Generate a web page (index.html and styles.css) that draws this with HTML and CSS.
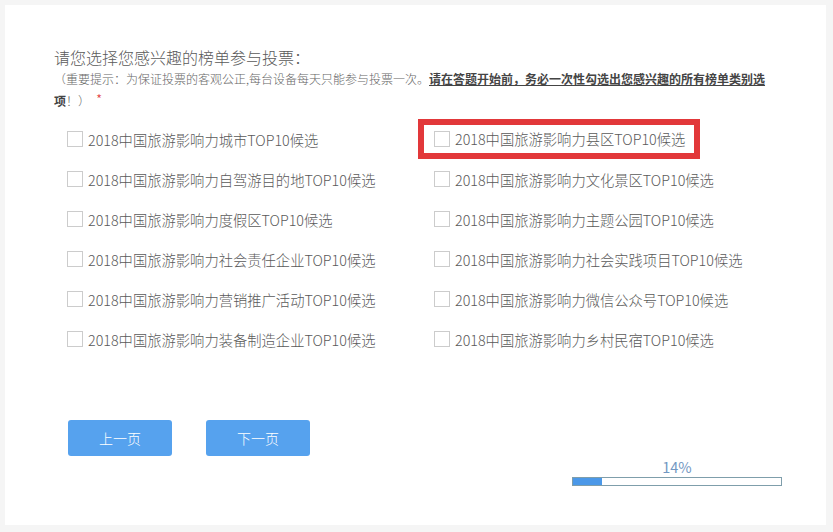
FILE: index.html
```html
<!DOCTYPE html>
<html lang="zh-CN">
<head>
<meta charset="utf-8">
<title>投票</title>
<link rel="stylesheet" href="styles.css">
</head>
<body>
<div class="card">
  <div class="title">请您选择您感兴趣的榜单参与投票：</div>
  <div class="note">（重要提示：为保证投票的客观公正,每台设备每天只能参与投票一次。<b class="em">请在答题开始前，务必一次性勾选出您感兴趣的所有榜单类别选</b><br><b class="em-plain">项</b>！）<span class="star">*</span></div>
  <div class="options">
    <div class="opt"><span class="box"></span>2018中国旅游影响力城市TOP10候选</div>
    <div class="opt"><span class="opt-hl"><span class="box"></span>2018中国旅游影响力县区TOP10候选</span></div>
    <div class="opt"><span class="box"></span>2018中国旅游影响力自驾游目的地TOP10候选</div>
    <div class="opt"><span class="box"></span>2018中国旅游影响力文化景区TOP10候选</div>
    <div class="opt"><span class="box"></span>2018中国旅游影响力度假区TOP10候选</div>
    <div class="opt"><span class="box"></span>2018中国旅游影响力主题公园TOP10候选</div>
    <div class="opt"><span class="box"></span>2018中国旅游影响力社会责任企业TOP10候选</div>
    <div class="opt"><span class="box"></span>2018中国旅游影响力社会实践项目TOP10候选</div>
    <div class="opt"><span class="box"></span>2018中国旅游影响力营销推广活动TOP10候选</div>
    <div class="opt"><span class="box"></span>2018中国旅游影响力微信公众号TOP10候选</div>
    <div class="opt"><span class="box"></span>2018中国旅游影响力装备制造企业TOP10候选</div>
    <div class="opt"><span class="box"></span>2018中国旅游影响力乡村民宿TOP10候选</div>
  </div>
  <div class="buttons">
    <button class="btn">上一页</button>
    <button class="btn">下一页</button>
  </div>
  <div class="progress">
    <div class="pct">14%</div>
    <div class="bar"><div class="fill" style="width:14%"></div></div>
  </div>
</div>
</body>
</html>
```
FILE: styles.css
```css
html, body {
  margin: 0;
  padding: 0;
  background: #f5f5f5;
}
body {
  width: 833px;
  height: 532px;
  overflow: hidden;
  font-family: "Noto Sans CJK SC", "Noto Sans", sans-serif;
  font-weight: 300;
  color: #5a5a5a;
}
.card {
  margin: 5px;
  width: 821px;
  height: 520px;
  background: #fff;
  box-sizing: border-box;
  padding: 41px 0 0 49px;
}
.title {
  font-size: 16px;
  line-height: 22px;
  color: #5a5a5a;
}
.note {
  font-size: 12px;
  line-height: 22px;
  color: #666;
}
.em {
  font-weight: bold;
  color: #444;
  text-decoration: underline;
}
.em-plain {
  font-weight: bold;
  color: #444;
}
.star {
  color: #e2383a;
  margin-left: 6px;
  font-size: 14px;
  line-height: 14px;
  position: relative;
  top: -1px;
}
.options {
  margin: 7px 0 0 13px;
  display: grid;
  grid-template-columns: 367px 367px;
}
.opt {
  height: 40px;
  display: flex;
  align-items: center;
  font-size: 14.3px;
  color: #5a5a5a;
  white-space: nowrap;
}
.box {
  width: 16px;
  height: 16px;
  box-sizing: border-box;
  border: 1px solid #cccccc;
  background: #fff;
  margin-right: 5px;
  flex: none;
}
.opt-hl {
  display: flex;
  align-items: center;
  height: 40px;
  box-sizing: border-box;
  border: 6px solid #e2383a;
  margin-left: -16px;
  margin-top: -1px;
  padding: 0 9px 0 10px;
}
.buttons {
  display: flex;
  gap: 34px;
  margin: 61px 0 0 14px;
}
.btn {
  width: 104px;
  height: 36px;
  border: none;
  border-radius: 3px;
  background: #56a2ee;
  color: #fff;
  font-family: "Noto Sans CJK SC", sans-serif;
  font-weight: 300;
  font-size: 14px;
  padding: 0;
}
.progress {
  margin: 2px 0 0 518px;
  width: 210px;
}
.pct {
  text-align: center;
  font-size: 14.5px;
  font-weight: 400;
  line-height: 17px;
  color: #7297c2;
}
.bar {
  margin-top: 2px;
  height: 9px;
  box-sizing: border-box;
  border: 1px solid #7f9eab;
  background: #fff;
}
.fill {
  height: 100%;
  background: #4b98e8;
}
```
